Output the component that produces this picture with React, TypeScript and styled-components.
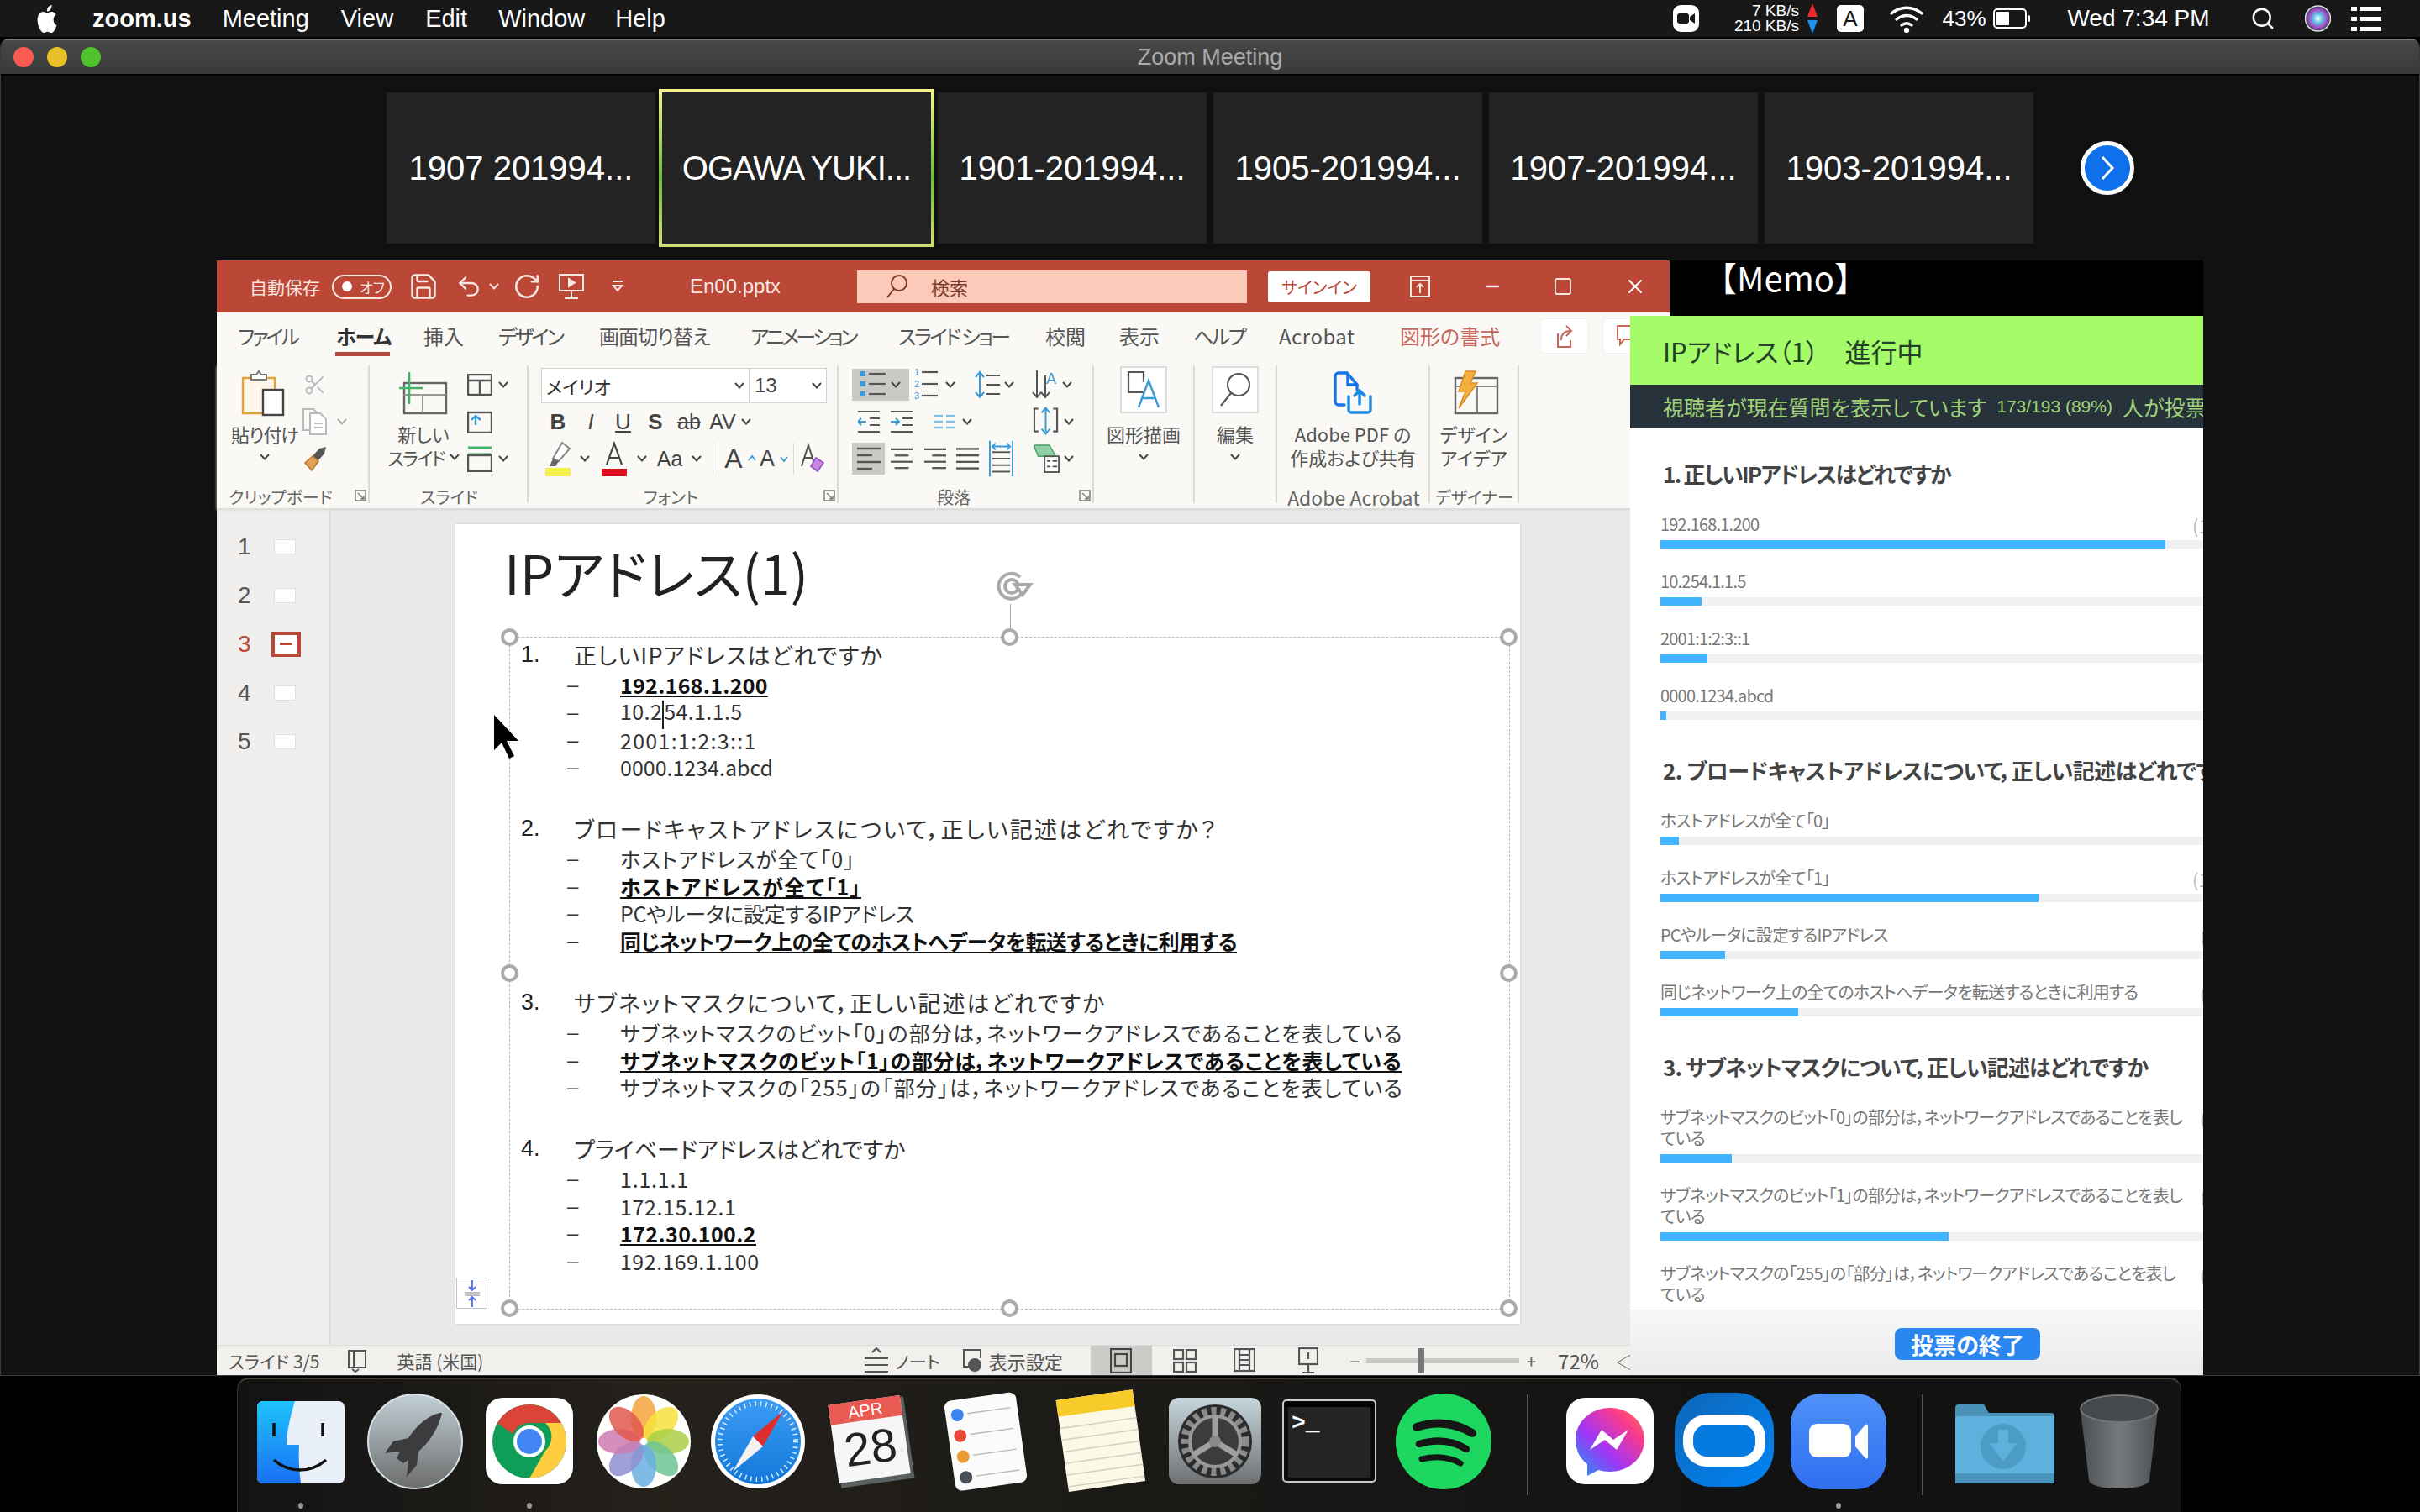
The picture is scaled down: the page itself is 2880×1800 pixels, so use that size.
import React from 'react';
import styled, { createGlobalStyle } from 'styled-components';
import { Save, Undo2, RotateCw, Scissors, Search, X, Minus, Square } from 'lucide-react';

const JP = `"Noto Sans CJK JP", "Liberation Sans", sans-serif`;
const SANS = `"Liberation Sans", "Noto Sans CJK JP", sans-serif`;

const Global = createGlobalStyle`
  html, body { margin: 0; padding: 0; background: #000; overflow: hidden; }
  * { box-sizing: border-box; }
`;

const Desktop = styled.div`
  width: 2880px; height: 1800px; background: #000; display: flex; flex-direction: column;
  overflow: hidden; font-family: ${SANS}; font-feature-settings: "palt";
`;

/* ---------- macOS menu bar ---------- */
const MenuBar = styled.div`
  height: 44px; flex: none; background: #181818; display: flex; align-items: center; color: #fff;
  padding: 0 46px 0 42px; font-size: 29px;
`;
const MenuItem = styled.span<{ $ml: number; $bold?: boolean }>`
  margin-left: ${p => p.$ml}px; font-weight: ${p => (p.$bold ? 700 : 400)}; white-space: nowrap;
`;
const MenuRight = styled.div`margin-left: auto; display: flex; align-items: center; height: 44px;`;
const MenuSlot = styled.div<{ $ml: number; $w: number; $fs?: number }>`
  margin-left: ${p => p.$ml}px; width: ${p => p.$w}px; flex: none; display: flex; align-items: center;
  justify-content: center; font-size: ${p => p.$fs ?? 28}px; white-space: nowrap; color: #fff;
`;
const NetStats = styled.div`
  margin-left: 38px; width: 81px; flex: none; display: flex; flex-direction: column; align-items: flex-end;
  font-size: 19px; line-height: 18px; color: #fff; white-space: nowrap;
`;
const KeyBox = styled.div`
  width: 32px; height: 32px; border-radius: 5px; background: #fff; color: #181818; font-size: 26px;
  display: flex; align-items: center; justify-content: center;
`;

/* ---------- Zoom window ---------- */
const ZoomWindow = styled.div`
  margin-top: 2px; height: 1592px; flex: none; display: flex; flex-direction: column; background: #111;
  border: 1px solid #3a3a3a; border-top: none; border-radius: 10px 10px 0 0; overflow: hidden;
`;
const ZoomTitle = styled.div`
  height: 44px; flex: none; background: linear-gradient(#4c4c4c, #464646 12%, #3a3a3a); border-top: 2px solid #7a7a7a;
  border-bottom: 2px solid #000; display: grid; grid-template-columns: 1fr auto 1fr; align-items: center;
  color: #ababab; font-size: 27px;
`;
const Lights = styled.div`display: flex; gap: 16px; padding-left: 15px;`;
const Light = styled.span<{ $c: string }>`width: 24px; height: 24px; border-radius: 50%; background: ${p => p.$c};`;

const ThumbStrip = styled.div`
  height: 220px; flex: none; padding: 20px 0 20px 459px; display: flex; gap: 8px; align-items: center;
`;
const Thumb = styled.div<{ $active?: boolean }>`
  width: ${p => (p.$active ? 328 : 320)}px; height: ${p => (p.$active ? 188 : 180)}px;
  margin: ${p => (p.$active ? '-4px' : '0')};
  display: flex; align-items: center; justify-content: center; color: #fff; font-size: 40px; white-space: nowrap;
  background: #232323;
  ${p => p.$active && `
    letter-spacing: -1px;
    border: 4px solid transparent;
    background: linear-gradient(#232323,#232323) padding-box, linear-gradient(#f6f68c,#6fbb3a 55%,#d2de72) border-box;
  `}
`;
const NextBtn = styled.div`
  width: 64px; height: 64px; margin-left: 48px; border-radius: 50%; background: #0e71eb; border: 5px solid #fff;
  display: flex; align-items: center; justify-content: center;
`;

const ShareArea = styled.div`flex: 1; display: flex; position: relative; padding-left: 257px; min-height: 0;`;
const SideColumn = styled.div`width: 635px; flex: none;`;
const Memo = styled.div`
  height: 66px; background: #000; color: #fff; font-family: ${JP}; font-size: 40px; line-height: 40px; padding-left: 40px;
  font-feature-settings: normal;
`;

/* ---------- PowerPoint ---------- */
const Ppt = styled.div`width: 1729px; flex: none; display: flex; flex-direction: column; font-family: ${JP}; background: #faf9f6;`;
const PptBar = styled.div`
  height: 62px; flex: none; background: #bb4737; display: flex; align-items: center; color: #f8e6e0; padding-left: 39px;
`;
const AutoSave = styled.span`font-size: 21px; width: 98px; flex: none; white-space: nowrap;`;
const Toggle = styled.div`
  width: 71px; height: 29px; border: 2px solid #f8e6e0; border-radius: 15px; display: flex; align-items: center;
  padding-left: 10px; gap: 9px; font-size: 17px;
`;
const ToggleDot = styled.span`width: 12px; height: 12px; background: #fff; border-radius: 50%;`;
const BarIcon = styled.div<{ $ml: number; $w: number }>`
  margin-left: ${p => p.$ml}px; width: ${p => p.$w}px; flex: none; display: flex; align-items: center; justify-content: center;
`;
const FileName = styled.span`font-family: ${SANS}; font-size: 24px; margin-left: 78px; width: 199px; flex: none;`;
const SearchBox = styled.div`
  width: 464px; height: 39px; flex: none; background: #fdc9b9; display: flex; align-items: center; padding-left: 34px; color: #7a3a2c;
  font-size: 22px; gap: 28px;
`;
const SignIn = styled.div`
  width: 122px; height: 37px; flex: none; margin-left: 25px; background: #fff; color: #bb4737; border-radius: 3px; display: flex;
  align-items: center; justify-content: center; font-size: 20px;
`;

const TabRow = styled.div`height: 62px; flex: none; display: flex; padding-left: 25px; align-items: flex-start;`;
const Tab = styled.div<{ $w: number; $ls: number; $active?: boolean; $accent?: boolean }>`
  width: ${p => p.$w}px; height: 50px; flex: none; line-height: 56px; font-size: 24px; white-space: nowrap; position: relative;
  letter-spacing: ${p => p.$ls}px;
  color: ${p => (p.$accent ? '#c6675a' : p.$active ? '#333' : '#555')}; font-weight: ${p => (p.$active ? 700 : 400)};
  ${p => p.$active && `
    &::after { content: ''; position: absolute; left: -1px; top: 47px; width: 65px; height: 5px; background: #b5463a; }
  `}
`;
const TabBtn = styled.div`
  width: 58px; height: 42px; margin: 7px 16px 0 0; background: #fff; border: 1px solid #efeeea; border-radius: 3px; flex: none;
  display: flex; align-items: center; justify-content: center;
`;

const Groups = styled.div`height: 171px; flex: none; display: flex; box-shadow: 0 2px 3px #d8d8d8; position: relative;`;
const Group = styled.div<{ $w: number }>`
  width: ${p => p.$w}px; flex: none; position: relative; display: flex; flex-direction: column;
  &::after { content: ''; position: absolute; right: 0; top: 1px; width: 2px; height: 164px; background: #dddbd6; }
`;
const GroupBody = styled.div`height: 145px; flex: none; display: flex;`;
const GroupLabel = styled.div<{ $launcher?: boolean; $latin?: boolean }>`
  height: 26px; line-height: 26px; font-size: ${p => (p.$latin ? 23 : 20)}px; color: #666; text-align: center; white-space: nowrap;
  padding-right: ${p => (p.$launcher ? 30 : 0)}px;
`;
const Launcher = styled.svg`position: absolute; right: 4px; bottom: 8px; width: 14px; height: 14px;`;

const BigBtn = styled.div<{ $w: number; $ml?: number }>`
  width: ${p => p.$w}px; margin-left: ${p => p.$ml ?? 0}px; flex: none; display: flex; flex-direction: column; align-items: center;
`;
const BigIcon = styled.div`height: 68px; flex: none; display: flex; align-items: center; justify-content: center;`;
const BoxIcon = styled.div`
  width: 56px; height: 56px; margin: 2px 0 10px; background: #fff; border: 2px solid #ddd; flex: none; display: flex;
  align-items: center; justify-content: center;
`;
const BigText = styled.div<{ $ls?: number }>`
  height: 28px; line-height: 28px; font-size: 22px; color: #555; white-space: nowrap; display: flex; align-items: center; gap: 6px;
  letter-spacing: ${p => p.$ls ?? 0}px;
`;
const ToolCol = styled.div<{ $ml?: number }>`margin-left: ${p => p.$ml ?? 0}px; padding-top: 2px; display: flex; flex-direction: column;`;
const ToolRow = styled.div<{ $ml?: number }>`height: 44px; display: flex; align-items: center; margin-left: ${p => p.$ml ?? 0}px;`;
const Slot = styled.div<{ $w: number; $ml?: number; $sel?: boolean }>`
  width: ${p => p.$w}px; margin-left: ${p => p.$ml ?? 0}px; height: 38px; flex: none; display: flex; align-items: center;
  justify-content: center; color: #444; background: ${p => (p.$sel ? '#cbc9c5' : 'transparent')}; gap: 6px;
`;
const Glyph = styled.span<{ $fs: number; $b?: boolean; $i?: boolean; $u?: boolean; $s?: boolean; $c?: string }>`
  font-family: ${SANS}; font-size: ${p => p.$fs}px; line-height: 1; color: ${p => p.$c ?? '#444'};
  font-weight: ${p => (p.$b ? 700 : 400)}; font-style: ${p => (p.$i ? 'italic' : 'normal')};
  text-decoration: ${p => (p.$u ? 'underline' : p.$s ? 'line-through' : 'none')}; white-space: nowrap;
`;
const VSep = styled.span`width: 1px; height: 38px; background: #dad8d3; flex: none;`;
const SelectRow = styled.div`display: flex; height: 42px; margin-left: 15px; margin-top: 2px;`;
const Select = styled.div<{ $w: number }>`
  width: ${p => p.$w}px; background: #fff; border: 1px solid #d4d2cd; display: flex; align-items: center; justify-content: space-between;
  padding: 0 5px 0 5px; font-size: 22px; color: #333; flex: none;
`;

/* ---------- work area ---------- */
const Main = styled.div`flex: 1; display: flex; min-height: 0; background: #e9e8ea;`;
const Pane = styled.div`
  width: 136px; flex: none; background: #f0efed; border-right: 2px solid #dcdcdc; padding: 27px 0 0 25px; display: flex;
  flex-direction: column; gap: 20px;
`;
const PaneRow = styled.div<{ $active?: boolean }>`
  height: 38px; display: flex; align-items: center; font-family: ${SANS}; font-size: 28px; color: ${p => (p.$active ? '#bb4737' : '#555')};
`;
const PaneNum = styled.span`width: 43px;`;
const PaneThumb = styled.span<{ $active?: boolean }>`
  background: #fff; flex: none;
  ${p => p.$active
    ? `width: 35px; height: 30px; margin-left: -3px; border: 4px solid #bb4737; position: relative;
       &::after { content: ''; position: absolute; left: 6px; right: 6px; top: 9px; height: 3px; background: #bb4737; }`
    : `width: 26px; height: 18px; border: 1px solid #dedede;`}
`;
const Canvas = styled.div`flex: 1; padding: 19px 0 0 148px; min-width: 0;`;
const Slide = styled.div`
  width: 1267px; height: 952px; background: #fff; box-shadow: 0 0 2px #bbb; position: relative; padding-left: 64px;
`;
const SlideTitle = styled.div`
  height: 134px; padding-top: 11px; font-size: 64px; line-height: 90px; color: #222; margin-left: -6px; white-space: nowrap;
`;
const TextBox = styled.div`
  width: 1191px; height: 801px; border: 1px dashed #b5b5b5; position: relative; padding: 1px 0 0 13px; color: #333;
`;
const Handle = styled.span<{ $x: number; $y: number }>`
  position: absolute; left: ${p => p.$x * 100}%; top: ${p => p.$y * 100}%; width: 21px; height: 21px; margin: -11px 0 0 -11px;
  border-radius: 50%; background: #fff; border: 4px solid #aaa;
`;
const RotLine = styled.span`position: absolute; left: 50%; top: -40px; width: 1px; height: 32px; background: #aaa; margin-left: 0;`;
const RotIcon = styled.svg`position: absolute; left: 50%; top: -83px; margin-left: -20px; width: 48px; height: 44px;`;
const FitBtn = styled.div`
  position: absolute; left: -64px; bottom: 0; width: 37px; height: 37px; background: #fff; border: 1px solid #c4c4c4;
  display: flex; align-items: center; justify-content: center;
`;
const Cursor = styled.svg`position: absolute; left: -20px; top: 92px; width: 32px; height: 52px;`;
const QBlock = styled.div`margin-bottom: 37px;`;
const QRow = styled.div`height: 39px; display: flex; align-items: center; font-size: 27px; white-space: nowrap;`;
const QNum = styled.span`width: 63px; flex: none; font-family: ${SANS}; font-size: 27px; color: #222;`;
const QText = styled.span<{ $ls: number }>`letter-spacing: ${p => p.$ls}px;`;
const SubRow = styled.div`height: 32.7px; display: flex; align-items: center; margin-left: 55px; font-size: 25px; white-space: nowrap;`;
const Dash = styled.span`width: 63px; flex: none; font-family: ${SANS}; font-size: 24px;`;
const SubText = styled.span<{ $b?: boolean; $ls: number }>`
  font-weight: ${p => (p.$b ? 700 : 400)}; text-decoration: ${p => (p.$b ? 'underline' : 'none')};
  color: ${p => (p.$b ? '#111' : '#333')}; letter-spacing: ${p => p.$ls}px;
`;
const Caret = styled.span`display: inline-block; width: 0; height: 34px; border-left: 2px solid #222; vertical-align: middle;`;

const StatusBar = styled.div`
  height: 36px; flex: none; background: #f1f0ec; border-top: 1px solid #ddd; display: flex; align-items: center; font-size: 21px; color: #555;
`;
const StatusSlot = styled.div<{ $ml: number; $w?: number; $sel?: boolean; $fs?: number }>`
  margin-left: ${p => p.$ml}px; ${p => p.$w && `width: ${p.$w}px;`} flex: none; height: 35px; display: flex; align-items: center;
  justify-content: center; white-space: nowrap; background: ${p => (p.$sel ? '#cdcbc8' : 'transparent')}; gap: 8px;
  ${p => p.$fs && `font-size: ${p.$fs}px;`}
`;
const Zoomer = styled.div`
  margin-left: 8px; width: 182px; height: 6px; background: #c9c8c5; flex: none; position: relative;
  &::after { content: ''; position: absolute; left: 62px; top: -12px; width: 7px; height: 30px; background: #777; }
`;

/* ---------- poll ---------- */
const Poll = styled.div`
  position: absolute; left: 1939px; top: 66px; width: 682px; bottom: 0; background: #fff; display: flex; flex-direction: column;
  font-family: ${JP}; overflow: hidden;
`;
const PollHead = styled.div`
  height: 82px; flex: none; background: #a6fb68; display: flex; align-items: center; padding-left: 39px; font-size: 31px; color: #24412a;
  white-space: pre;
`;
const PollStatus = styled.div`
  height: 52px; flex: none; background: #27323a; display: flex; align-items: center; padding-left: 39px; color: #a0d27a; font-size: 25px;
  white-space: nowrap; overflow: hidden; gap: 12px;
`;
const PollCount = styled.span`font-size: 21px; font-family: ${SANS};`;
const PollBody = styled.div`flex: 1; min-height: 0; overflow: hidden; padding: 38px 0 0 36px;`;
const PollQ = styled.div<{ $ls: number }>`
  height: 32px; line-height: 32px; margin: 0 0 31px 3px; font-size: 26px; font-weight: 700; color: #444; white-space: nowrap;
  letter-spacing: ${p => p.$ls}px;
`;
const PollOpt = styled.div`position: relative; margin-bottom: 26px;`;
const OptText = styled.div`font-size: 20px; line-height: 25px; letter-spacing: -0.8px; color: #777; white-space: pre-line; margin-bottom: 7px;`;
const OptTrack = styled.div`height: 10px; width: 680px; background: #f0f0f2;`;
const OptFill = styled.div`height: 10px; background: #42b4ff;`;
const OptMark = styled.span<{ $far?: boolean }>`
  position: absolute; top: -2px; left: ${p => (p.$far ? 642 : 633)}px; font-size: 22px; color: #bbb; white-space: nowrap;
`;
const PollGroup = styled.div`margin-bottom: 44px;`;
const PollFoot = styled.div`
  height: 78px; flex: none; background: linear-gradient(#f7f7f7, #ebebeb); border-top: 1px solid #ddd; display: flex;
  padding: 21px 0 0 315px;
`;
const EndBtn = styled.div`
  width: 173px; height: 38px; border-radius: 8px; background: #2a86f0; color: #fff; font-weight: 700; font-size: 27px; display: flex;
  align-items: center; justify-content: center;
`;

/* ---------- dock ---------- */
const Dock = styled.div`
  margin: 2px 0 0 282px; width: 2314px; height: 160px; flex: none; padding-left: 7px; display: flex;
  background: linear-gradient(90deg, #131313, #25211b 22%, #1b1a17 45%, #121212 80%, #131313);
  border-top: 2px solid #444038; border-right: 1px solid #333; border-left: 1px solid #333; border-radius: 14px 14px 0 0;
`;
const DockItem = styled.div`width: 136px; flex: none; padding: 12px 6px 0; position: relative;`;
const DockDot = styled.span`position: absolute; left: 65px; top: 147px; width: 6px; height: 7px; border-radius: 50%; background: #999;`;
const DockSep = styled.div`
  width: 62px; flex: none; position: relative;
  &::after { content: ''; position: absolute; left: 31px; top: 18px; width: 1px; height: 120px; background: #555; }
`;
const Svg = styled.svg.attrs({ viewBox: '0 0 124 124', xmlns: 'http://www.w3.org/2000/svg' })`width: 124px; height: 124px; display: block;`;

/* ---------- small icons ---------- */
const Chev = ({ c = '#444' }: { c?: string }) => (
  <svg width="12" height="8" viewBox="0 0 12 8"><polyline points="1,1 6,6.5 11,1" fill="none" stroke={c} strokeWidth="2" /></svg>
);
const LaunchIcon = () => (
  <Launcher viewBox="0 0 14 14"><path d="M1 13V1h12v12z" fill="none" stroke="#777" strokeWidth="1.4" /><path d="M4 4l7 7M11 7v4H7" fill="none" stroke="#777" strokeWidth="1.4" /></Launcher>
);
const s = (w: number, h: number, body: React.ReactNode) => <svg width={w} height={h} viewBox={`0 0 ${w} ${h}`}>{body}</svg>;
const lines = (ys: number[], x1: number, x2: number, c = '#555', sw = 2) => ys.map(y => <line key={y} x1={x1} x2={x2} y1={y} y2={y} stroke={c} strokeWidth={sw} />);
const alignLines = (rows: [number, number][]) => rows.map(([a, b], i) => <line key={i} x1={a} x2={b} y1={3 + i * 8} y2={3 + i * 8} stroke="#555" strokeWidth="2.4" />);

const AppleLogo = () => (
  <svg width="28" height="33" viewBox="0 0 24 24" preserveAspectRatio="none"><path fill="#fff" d="M12.152 6.896c-.948 0-2.415-1.078-3.96-1.04-2.04.027-3.91 1.183-4.961 3.014-2.117 3.675-.546 9.103 1.519 12.09 1.013 1.454 2.208 3.09 3.792 3.039 1.52-.065 2.09-.987 3.935-.987 1.831 0 2.35.987 3.96.948 1.637-.026 2.676-1.48 3.676-2.948 1.156-1.688 1.636-3.325 1.662-3.415-.039-.013-3.182-1.221-3.22-4.857-.026-3.04 2.48-4.494 2.597-4.559-1.429-2.09-3.623-2.324-4.39-2.376-2-.156-3.675 1.09-4.61 1.09zM15.53 3.83c.843-1.012 1.4-2.427 1.245-3.83-1.207.052-2.662.805-3.532 1.818-.78.896-1.454 2.338-1.273 3.714 1.338.104 2.715-.688 3.559-1.701" /></svg>
);
const ZoomBarIcon = () => s(31, 32, <><rect width="31" height="32" rx="9" fill="#fff" /><rect x="5" y="10" width="14" height="12" rx="3" fill="#181818" /><path d="M20 14l6-4v12l-6-4z" fill="#181818" /></>);
const Arrows = () => s(14, 36, <><path d="M7 0l6 16H1z" fill="#f02a2a" /><path d="M7 36L1 20h12z" fill="#1e90f0" /></>);
const WifiIcon = () => s(42, 34, <g fill="none" stroke="#fff" strokeWidth="3.4" strokeLinecap="round"><path d="M3 11C14 2 28 2 39 11" /><path d="M9 18c8-6 16-6 24 0" /><path d="M15 25c4-3 8-3 12 0" /><circle cx="21" cy="31" r="1.5" fill="#fff" /></g>);
const Battery = () => s(45, 24, <><rect x="1" y="1" width="38" height="22" rx="4" fill="none" stroke="#fff" strokeWidth="2" /><rect x="4" y="4" width="15" height="16" rx="1" fill="#fff" /><rect x="41" y="8" width="3" height="8" rx="1.5" fill="#fff" /></>);
const Siri = () => (
  <svg width="31" height="32" viewBox="0 0 31 32"><defs><radialGradient id="sr"><stop offset="0" stopColor="#fff" /><stop offset=".35" stopColor="#5bc8e8" /><stop offset=".7" stopColor="#a84fc8" /><stop offset="1" stopColor="#30405a" /></radialGradient></defs><circle cx="15.5" cy="16" r="15" fill="url(#sr)" stroke="#ddd" strokeWidth="1.5" /></svg>
);
const ListIcon = () => s(36, 29, <g fill="#fff"><rect width="7" height="5" /><rect x="11" width="25" height="5" /><rect y="12" width="7" height="5" /><rect x="11" y="12" width="25" height="5" /><rect y="24" width="7" height="5" /><rect x="11" y="24" width="25" height="5" /></g>);

const UndoChev = () => <Chev c="#f8e6e0" />;
const Present = () => s(30, 30, <g fill="none" stroke="#f8e6e0" strokeWidth="2"><rect x="1" y="1" width="28" height="19" /><path d="M15 20v9M7 29h16" /><path d="M12 6l7 4.5-7 4.5z" fill="#f8e6e0" /></g>);
const QatMore = () => s(14, 16, <g fill="none" stroke="#f8e6e0" strokeWidth="2"><path d="M1 2h12" /><path d="M2 7l5 6 5-6z" /></g>);
const RibbonDisp = () => s(24, 26, <g fill="none" stroke="#f8e6e0" strokeWidth="2"><rect x="1" y="1" width="22" height="24" /><path d="M1 6h22M12 21v-10M8 14l4-4 4 4" /></g>);
const ShareIcon = () => s(20, 30, <g fill="none" stroke="#c6675a" strokeWidth="2"><path d="M2 12v16h15V20" /><path d="M6 20c0-7 4-11 11-11M12 3l6 6-6 6" /></g>);
const CommentIcon = () => s(26, 28, <path d="M2 2h22v16H10l-5 6v-6H2z" fill="none" stroke="#c6675a" strokeWidth="2" />);

const PasteIcon = () => s(56, 56, <>
  <path d="M2 10h38v42H2z" fill="#fff8ea" stroke="#e2a33c" strokeWidth="2.4" />
  <path d="M12 12V6h6l3-4 3 4h6v6z" fill="#fff" stroke="#777" strokeWidth="2" />
  <rect x="26" y="24" width="24" height="30" fill="#fff" stroke="#444" strokeWidth="2.4" /></>);
const ScissorsIcon = () => <Scissors size={28} color="#b8bcc0" strokeWidth={1.6} />;
const CopyIcon = () => s(30, 32, <g fill="none" stroke="#b8bcc0" strokeWidth="2"><path d="M8 26H1V1h12l5 5" /><path d="M9 6h12l7 7v18H9z" fill="#fff" /><path d="M14 18h10M14 23h10" /></g>);
const BrushIcon = () => s(30, 32, <><path d="M28 2l-8 2-8 9 6 6 8-9z" fill="#555" /><path d="M12 13l-9 8 8 9 8-11z" fill="#e3a253" stroke="#b47a30" strokeWidth="1.5" /></>);
const NewSlideIcon = () => s(58, 52, <g fill="none"><rect x="6" y="14" width="50" height="36" stroke="#666" strokeWidth="2.4" /><path d="M6 28h50M28 28v22" stroke="#999" strokeWidth="2" /><path d="M12 1v38M0 20h28" stroke="#43b36a" strokeWidth="2.6" /></g>);
const LayoutIcon = () => s(30, 26, <g fill="none" stroke="#555" strokeWidth="2.4"><rect x="1" y="1" width="28" height="24" /><path d="M1 8h28M15 8v17" /></g>);
const ResetIcon = () => s(30, 28, <g fill="none"><rect x="1" y="3" width="28" height="24" stroke="#555" strokeWidth="2.4" /><path d="M10 18V8M5 12l5-5 6 5" stroke="#3a9bd8" strokeWidth="2.4" /></g>);
const SectionIcon = () => s(30, 32, <g fill="none"><path d="M1 3h28" stroke="#43b36a" strokeWidth="3" /><rect x="1" y="9" width="28" height="3" fill="#8fd0a5" /><rect x="1" y="12" width="28" height="19" stroke="#555" strokeWidth="2.4" /></g>);
const HighlightIcon = () => s(32, 42, <><path d="M20 2l9 7-13 15-7-3z" fill="#fff" stroke="#888" strokeWidth="2" /><path d="M9 21l7 3-4 6H5z" fill="#666" /><rect y="32" width="30" height="10" fill="#f6f04a" /></>);
const FontColorA = () => (
  <svg width="30" height="42" viewBox="0 0 30 42"><path d="M6 28L15 3l9 25M9 20h12" fill="none" stroke="#444" strokeWidth="2.2" /><rect y="33" width="30" height="9" fill="#e10e1e" /></svg>
);
const ClearIcon = () => s(30, 38, <><path d="M2 28L10 3l8 25M5 18h10" fill="none" stroke="#555" strokeWidth="2" /><path d="M19 18l9 6-7 10-8-6z" fill="#c98ae0" stroke="#9a4fc0" strokeWidth="1.6" /></>);
const UpDown = () => s(10, 12, <path d="M1 8l4-5 4 5" fill="none" stroke="#3a9bd8" strokeWidth="1.8" />);
const DownMark = () => s(10, 12, <path d="M1 4l4 5 4-5" fill="none" stroke="#3a9bd8" strokeWidth="1.8" />);
const BulletIcon = () => s(30, 34, <>{[4, 16, 28].map(y => <g key={y}><rect x="0" y={y - 3} width="6" height="6" fill="#3a9bd8" /><line x1="10" x2="30" y1={y} y2={y} stroke="#555" strokeWidth="2.2" /></g>)}</>);
const NumIcon = () => s(28, 42, <>{[6, 20, 34].map((y, i) => <g key={y}><text x="0" y={y + 4} fontSize="11" fontFamily="Liberation Sans" fill="#3a9bd8">{i + 1}</text><line x1="9" x2="28" y1={y} y2={y} stroke="#555" strokeWidth="2.2" /></g>)}</>);
const SpacingIcon = () => s(30, 36, <g><path d="M6 3v30M1 9l5-6 5 6M1 27l5 6 5-6" fill="none" stroke="#3a9bd8" strokeWidth="2" />{lines([7, 18, 29], 14, 30)}</g>);
const TextDirIcon = () => s(30, 38, <g fill="none"><path d="M6 2v32M1 28l5 6 5-6M16 8v26M11 28l5 6 5-6" stroke="#555" strokeWidth="2" /><text x="17" y="18" fontSize="18" fontFamily="Liberation Sans" fill="#3a9bd8">A</text></g>);
const IndentL = () => s(26, 28, <g>{lines([2, 26], 0, 26)}{lines([10, 18], 14, 26)}<path d="M0 14h10M4 10l-4 4 4 4" fill="none" stroke="#3a9bd8" strokeWidth="2" /></g>);
const IndentR = () => s(26, 28, <g>{lines([2, 26], 0, 26)}{lines([10, 18], 14, 26)}<path d="M0 14h10M6 10l4 4-4 4" fill="none" stroke="#3a9bd8" strokeWidth="2" /></g>);
const ColumnsIcon = () => s(24, 20, <g>{[3, 10, 17].map(y => <g key={y}><line x1="0" x2="10" y1={y} y2={y} stroke="#7fc0e8" strokeWidth="2.4" /><line x1="14" x2="24" y1={y} y2={y} stroke="#7fc0e8" strokeWidth="2.4" /></g>)}</g>);
const AlignTextIcon = () => s(32, 38, <g fill="none"><path d="M7 3H2v28h5M25 3h5v28h-5" stroke="#555" strokeWidth="2.2" /><path d="M16 2v30M11 8l5-6 5 6M11 28l5 6 5-6" stroke="#3a9bd8" strokeWidth="2" /></g>);
const Align = ({ rows }: { rows: [number, number][] }) => s(28, 30, <g>{alignLines(rows)}</g>);
const DistIcon = () => s(30, 44, <g>{lines([14, 22, 30, 38], 4, 26)}<path d="M1 0v44M29 0v44M4 7h22M8 3L4 7l4 4M22 3l4 4-4 4" fill="none" stroke="#3a9bd8" strokeWidth="2" /></g>);
const SmartIcon = () => s(34, 42, <><path d="M0 4h20l8 14H6z" fill="#8fd0a5" stroke="#43a060" strokeWidth="1.5" /><rect x="14" y="18" width="18" height="20" fill="#fff" stroke="#555" strokeWidth="2" /><path d="M17 24h4M24 24h6M17 31h4M24 31h6" stroke="#555" strokeWidth="2" /></>);
const ShapesIcon = () => s(40, 46, <><path d="M20 26H2V2h18v12" fill="none" stroke="#555" strokeWidth="2.2" /><path d="M14 44L26 12l12 32M19 33h14" fill="none" stroke="#3a9bd8" strokeWidth="2.4" /></>);
const FindIcon = () => <svg width="38" height="42" viewBox="0 0 38 42"><circle cx="23" cy="15" r="13" fill="none" stroke="#555" strokeWidth="2.2" /><path d="M14 25L2 40" stroke="#555" strokeWidth="2.2" /></svg>;
const PdfIcon = () => s(46, 52, <g fill="none" strokeLinecap="round" stroke="#1a73e8" strokeWidth="3.4"><path d="M13 40H6a4 4 0 0 1-4-4V6a4 4 0 0 1 4-4h10l12 14v6" /><path d="M17 3v13h11" /><path d="M18 30v16a3 3 0 0 0 3 3h20a3 3 0 0 0 3-3V30" stroke="#1a8ae8" /><path d="M31 39V23M25 29l6-6 6 6" stroke="#1a8ae8" /></g>);
const DesignIcon = () => s(60, 56, <g fill="none"><rect x="8" y="10" width="50" height="42" stroke="#666" strokeWidth="2.4" /><path d="M8 20h50M34 20v32" stroke="#888" strokeWidth="2" /><path d="M12 46l8-20h-8L20 2h12l-6 14h8z" fill="#f2b13c" stroke="#e08b20" strokeWidth="1.5" /></g>);
const FitIcon = () => s(22, 32, <g fill="none"><path d="M11 0v12M7 8l4 4 4-4M11 32V20M7 24l4-4 4 4" stroke="#4a6cf0" strokeWidth="1.8" /><path d="M2 15h18M2 18h18" stroke="#aaa" strokeWidth="1.6" /></g>);

const StatBook = () => s(24, 28, <g fill="none" stroke="#555" strokeWidth="2"><path d="M2 2h20v20H2z" /><path d="M8 2v20M6 24l4 3 4-3" /></g>);
const NotesI = () => s(28, 34, <g>{lines([14, 22, 30], 0, 28)}<path d="M9 7l5-5 5 5" fill="none" stroke="#555" strokeWidth="2" /></g>);
const DispI = () => s(24, 30, <g fill="none" stroke="#555" strokeWidth="2"><path d="M22 12V2H2v20h6" /><circle cx="15" cy="20" r="7" fill="#555" /></g>);
const ViewNormal = () => s(26, 30, <g fill="none" stroke="#444" strokeWidth="2.2"><rect x="1" y="1" width="24" height="28" /><rect x="6" y="7" width="14" height="14" /></g>);
const ViewSort = () => s(28, 28, <g fill="none" stroke="#555" strokeWidth="2.2"><rect x="1" y="1" width="11" height="11" /><rect x="16" y="1" width="11" height="11" /><rect x="1" y="16" width="11" height="11" /><rect x="16" y="16" width="11" height="11" /></g>);
const ViewRead = () => s(26, 30, <g fill="none" stroke="#555" strokeWidth="2.2"><rect x="1" y="1" width="24" height="26" /><path d="M7 1v26M19 1v26M7 8h12M7 14h12M7 20h12" /></g>);
const ViewShow = () => s(24, 32, <g fill="none" stroke="#555" strokeWidth="2.2"><rect x="1" y="1" width="22" height="19" /><path d="M12 20v10M5 30h14M12 6v8" /></g>);

/* ---------- dock icons ---------- */
const Finder = () => (
  <Svg><defs><linearGradient id="fb" x1="0" y1="0" x2="0" y2="1"><stop offset="0" stopColor="#1ec4fb" /><stop offset="1" stopColor="#1a6ff5" /></linearGradient></defs>
    <rect x="10" y="14" width="104" height="98" rx="7" fill="#e9f0f9" />
    <path d="M17 14h38c-6 20-10 38-10 52h15c-1 16 0 30 2 46H17a7 7 0 0 1-7-7V21a7 7 0 0 1 7-7z" fill="url(#fb)" />
    <path d="M30 40v16M88 40v16" stroke="#111" strokeWidth="3.5" />
    <path d="M30 84c18 16 44 16 62 0" fill="none" stroke="#111" strokeWidth="3.5" /></Svg>
);
const Launchpad = () => (
  <Svg><defs><linearGradient id="lp" x1="0" y1="0" x2="0" y2="1"><stop offset="0" stopColor="#c2d0d6" /><stop offset="1" stopColor="#6c6c6c" /></linearGradient></defs>
    <circle cx="62" cy="62" r="56" fill="url(#lp)" stroke="#d6e2e6" strokeWidth="2" />
    <path d="M92 28c-14 3-28 14-38 30l-18 4-10 14 18-2-4 8 8 6 6-4-2 20 12-14 2-16c14-12 24-28 28-46z" fill="#3c3c3e" /></Svg>
);
const Chrome = () => (
  <Svg><rect x="10" y="10" width="104" height="103" rx="20" fill="#fff" />
    <circle cx="62" cy="62" r="44" fill="#0f9d58" />
    <path d="M62 18a44 44 0 0 1 38 22H62a22 22 0 0 0-20 13L24 40a44 44 0 0 1 38-22z" fill="#db4437" />
    <path d="M100 40a44 44 0 0 1-38 66l19-33a22 22 0 0 0 0-33z" fill="#ffcd40" />
    <circle cx="62" cy="62" r="19" fill="#fff" /><circle cx="62" cy="62" r="15" fill="#4285f4" /></Svg>
);
const Photos = () => {
  const cs = ['#f5a33c', '#f6e23c', '#a9cf45', '#6fc495', '#6aaee0', '#8f8ed0', '#cd7bb0', '#e2584e'];
  return (
    <Svg><circle cx="62" cy="62" r="56" fill="#fff" />
      {cs.map((c, i) => <ellipse key={c} cx="62" cy="33" rx="15" ry="25" fill={c} opacity=".85" transform={`rotate(${i * 45} 62 62)`} />)}</Svg>
  );
};
const Safari = () => (
  <Svg><defs><linearGradient id="sf" x1="0" y1="0" x2="0" y2="1"><stop offset="0" stopColor="#3b9cf5" /><stop offset="1" stopColor="#1277d8" /></linearGradient></defs>
    <circle cx="62" cy="62" r="56" fill="#fff" /><circle cx="62" cy="62" r="51" fill="url(#sf)" />
    <circle cx="62" cy="62" r="45" fill="none" stroke="#fff" strokeWidth="6" strokeDasharray="1.5 5" opacity=".85" />
    <path d="M92 26L56 56l12 12z" fill="#e22c2c" /><path d="M32 98L56 56l12 12z" fill="#f2f2f2" /></Svg>
);
const Calendar = () => (
  <Svg><g transform="rotate(-8 62 62)">
    <rect x="18" y="14" width="88" height="98" fill="#5a5f60" />
    <rect x="16" y="12" width="86" height="94" fill="#f6f6f6" />
    <rect x="16" y="12" width="86" height="24" fill="#e85a52" />
    <text x="59" y="31" textAnchor="middle" fontFamily="Liberation Sans" fontSize="20" fill="#fff">APR</text>
    <text x="59" y="88" textAnchor="middle" fontFamily="Liberation Sans" fontSize="56" fill="#222">28</text></g></Svg>
);
const Reminders = () => (
  <Svg><g transform="rotate(-8 62 62)"><rect x="18" y="8" width="86" height="108" rx="8" fill="#fbfbfb" />
    {['#3c82f0', '#e8483c', '#ec9a34', '#4a5058'].map((c, i) => <g key={c}><circle cx="32" cy={26 + i * 25} r="7.5" fill={c} /><line x1="44" x2="96" y1={26 + i * 25} y2={26 + i * 25} stroke="#b8b8b8" strokeWidth="1.5" /></g>)}</g></Svg>
);
const NotesApp = () => (
  <Svg><g transform="rotate(-8 62 62)"><rect x="16" y="6" width="92" height="110" fill="#fbf8e6" /><rect x="16" y="6" width="92" height="20" fill="#f7cc2a" />
    {[40, 54, 68, 82, 96, 110].map(y => <line key={y} x1="16" x2="108" y1={y} y2={y} stroke="#d2cfc0" strokeWidth="1.5" />)}</g></Svg>
);
const SysPrefs = () => (
  <Svg><defs><linearGradient id="sp" x1="0" y1="0" x2="0" y2="1"><stop offset="0" stopColor="#c6d6dc" /><stop offset="1" stopColor="#6e7072" /></linearGradient></defs>
    <rect x="7" y="10" width="110" height="103" rx="12" fill="url(#sp)" />
    <circle cx="62" cy="62" r="44" fill="#2a2c2e" /><circle cx="62" cy="62" r="36" fill="none" stroke="#8a8a8a" strokeWidth="10" strokeDasharray="6 5" />
    <circle cx="62" cy="62" r="30" fill="#3a3c3e" stroke="#999" strokeWidth="4" />
    <path d="M62 32v30M62 62L36 78M62 62l26 16" stroke="#a0a0a0" strokeWidth="7" /><circle cx="62" cy="62" r="7" fill="#8a8a8a" /></Svg>
);
const Terminal = () => (
  <Svg><rect x="7" y="13" width="110" height="97" rx="4" fill="#0a0a0a" stroke="#c8c8c8" strokeWidth="2" /><rect x="13" y="21" width="98" height="84" fill="#232323" />
    <rect x="9" y="15" width="106" height="6" fill="#000" />
    <text x="17" y="48" fontFamily="Liberation Mono" fontWeight="700" fontSize="28" fill="#fff">&gt;_</text></Svg>
);
const Spotify = () => (
  <Svg><circle cx="62" cy="62" r="57" fill="#1ed760" />
    <g fill="none" stroke="#161616" strokeLinecap="round"><path d="M30 45c24-8 46-5 66 7" strokeWidth="10" /><path d="M33 65c20-6 40-4 56 6" strokeWidth="8.5" /><path d="M36 83c17-4 32-3 46 5" strokeWidth="7" /></g></Svg>
);
const Messenger = () => (
  <Svg><defs><linearGradient id="ms" x1="0" y1="1" x2="1" y2="0"><stop offset="0" stopColor="#1a9cf5" /><stop offset=".4" stopColor="#a035f5" /><stop offset=".75" stopColor="#f93a8c" /><stop offset="1" stopColor="#ff7a50" /></linearGradient></defs>
    <rect x="10" y="10" width="104" height="103" rx="22" fill="#fff" />
    <path d="M62 22c-23 0-41 17-41 38 0 12 5 22 14 29v14l13-7c4 1 9 2 14 2 23 0 41-17 41-38S85 22 62 22z" fill="url(#ms)" />
    <path d="M38 72l14-24 14 12 18-12-14 24-14-12z" fill="#fff" /></Svg>
);
const Outlook = () => (
  <Svg><defs><linearGradient id="ol" x1="0" y1="0" x2="1" y2="1"><stop offset="0" stopColor="#0f66b8" /><stop offset="1" stopColor="#0084f4" /></linearGradient></defs>
    <rect x="3" y="4" width="118" height="112" rx="44" fill="url(#ol)" />
    <rect x="19" y="36" width="86" height="50" rx="22" fill="#057be0" stroke="#fff" strokeWidth="12" /></Svg>
);
const ZoomApp = () => (
  <Svg><defs><linearGradient id="zm" x1="0" y1="0" x2="0" y2="1"><stop offset="0" stopColor="#4f90f8" /><stop offset="1" stopColor="#2e6ff0" /></linearGradient></defs>
    <rect x="5" y="5" width="114" height="114" rx="36" fill="url(#zm)" />
    <rect x="27" y="41" width="50" height="40" rx="9" fill="#fff" /><path d="M82 56l12-14a2 2 0 0 1 3 1v38a2 2 0 0 1-3 1L82 68z" fill="#fff" /></Svg>
);
const Folder = () => (
  <Svg><path d="M3 22a4 4 0 0 1 4-4h30l6 10h74a4 4 0 0 1 4 4v6H3z" fill="#4a92b8" />
    <rect x="3" y="32" width="118" height="80" rx="3" fill="#5eb1dc" /><rect x="3" y="100" width="118" height="12" fill="#4a94bc" />
    <ellipse cx="60" cy="68" rx="27" ry="27" fill="#4d9cc6" /><path d="M54 48h12v16h10L60 86 44 64h10z" fill="#5eb1dc" /></Svg>
);
const Trash = () => (
  <Svg><defs><linearGradient id="tr" x1="0" y1="0" x2="1" y2="0"><stop offset="0" stopColor="#4c5054" /><stop offset=".5" stopColor="#777a7c" /><stop offset="1" stopColor="#4c5054" /></linearGradient></defs>
    <path d="M16 24l10 84c1 6 14 10 36 10s34-4 36-10l10-84z" fill="url(#tr)" /><ellipse cx="62" cy="23" rx="46" ry="16" fill="#46494c" stroke="#70757a" strokeWidth="2" /></Svg>
);

/* ---------- data ---------- */
const thumbs = ['1907 201994...', 'OGAWA YUKI...', '1901-201994...', '1905-201994...', '1907-201994...', '1903-201994...'];
const menus: [string, number, boolean?][] = [['zoom.us', 40, true], ['Meeting', 37], ['View', 38], ['Edit', 38], ['Window', 37], ['Help', 36]];
const tabs: [string, number, number][] = [['ファイル', 117, -3], ['ホーム', 104, -1], ['挿入', 89, 0], ['デザイン', 120, -3], ['画面切り替え', 180, -1], ['アニメーション', 176, -3.5], ['スライド ショー', 175, -2.5], ['校閲', 88, 0], ['表示', 88, 0], ['ヘルプ', 102, -2.5], ['Acrobat', 144, 0.5], ['図形の書式', 167, 0]];
type Sub = { t: React.ReactNode; b?: boolean; ls: number };
const slideQs: { q: string; ls: number; items: Sub[] }[] = [
  { q: '正しいIPアドレスはどれですか', ls: 1.3, items: [{ t: '192.168.1.200', b: true, ls: 0.3 }, { t: <>10.2<Caret />54.1.1.5</>, ls: 0.4 }, { t: '2001:1:2:3::1', ls: 1.3 }, { t: '0000.1234.abcd', ls: 0 }] },
  { q: 'ブロードキャストアドレスについて，正しい記述はどれですか？', ls: 2.3, items: [{ t: 'ホストアドレスが全て「0」', ls: 1.15 }, { t: 'ホストアドレスが全て「1」', b: true, ls: 1.07 }, { t: 'PCやルータに設定するIPアドレス', ls: -0.3 }, { t: '同じネットワーク上の全てのホストへデータを転送するときに利用する', b: true, ls: -0.55 }] },
  { q: 'サブネットマスクについて，正しい記述はどれですか', ls: 2, items: [{ t: 'サブネットマスクのビット「0」の部分は，ネットワークアドレスであることを表している', ls: 1.2 }, { t: 'サブネットマスクのビット「1」の部分は，ネットワークアドレスであることを表している', b: true, ls: 0.63 }, { t: 'サブネットマスクの「255」の「部分」は，ネットワークアドレスであることを表している', ls: 1.4 }] },
  { q: 'プライベードアドレスはどれですか', ls: -0.1, items: [{ t: '1.1.1.1', ls: 0.8 }, { t: '172.15.12.1', ls: 0.6 }, { t: '172.30.100.2', b: true, ls: 0.4 }, { t: '192.169.1.100', ls: 0.45 }] },
];
const pollQs: { title: string; ls: number; opts: { t: string; w: number; mark?: 'near' | 'far' }[] }[] = [
  { title: '1. 正しいIPアドレスはどれですか', ls: -1.7, opts: [{ t: '192.168.1.200', w: 601, mark: 'near' }, { t: '10.254.1.1.5', w: 49 }, { t: '2001:1:2:3::1', w: 56 }, { t: '0000.1234.abcd', w: 7 }] },
  { title: '2. ブロードキャストアドレスについて，正しい記述はどれですか', ls: -0.5, opts: [{ t: 'ホストアドレスが全て「0」', w: 22 }, { t: 'ホストアドレスが全て「1」', w: 450, mark: 'near' }, { t: 'PCやルータに設定するIPアドレス', w: 77, mark: 'far' }, { t: '同じネットワーク上の全てのホストへデータを転送するときに利用する', w: 164, mark: 'far' }] },
  { title: '3. サブネットマスクについて，正しい記述はどれですか', ls: -0.9, opts: [{ t: 'サブネットマスクのビット「0」の部分は，ネットワークアドレスであることを表し\nている', w: 85, mark: 'far' }, { t: 'サブネットマスクのビット「1」の部分は，ネットワークアドレスであることを表し\nている', w: 343, mark: 'far' }, { t: 'サブネットマスクの「255」の「部分」は，ネットワークアドレスであることを表し\nている', w: 285, mark: 'far' }] },
];
const handles: [number, number][] = [[0, 0], [0.5, 0], [1, 0], [0, 0.5], [1, 0.5], [0, 1], [0.5, 1], [1, 1]];
const dockLeft = [{ I: Finder, dot: true }, { I: Launchpad }, { I: Chrome, dot: true }, { I: Photos }, { I: Safari }, { I: Calendar }, { I: Reminders }, { I: NotesApp }, { I: SysPrefs }, { I: Terminal }, { I: Spotify }];
const dockMid = [{ I: Messenger }, { I: Outlook }, { I: ZoomApp, dot: true }];
const dockRight = [{ I: Folder }, { I: Trash }];
const renderDock = (list: { I: () => React.ReactElement; dot?: boolean }[]) => list.map(({ I, dot }, i) => <DockItem key={i}><I />{dot && <DockDot />}</DockItem>);

export default function App() {
  return (
    <Desktop>
      <Global />
      <MenuBar>
        <AppleLogo />
        {menus.map(([m, ml, b]) => <MenuItem key={m} $ml={ml} $bold={b}>{m}</MenuItem>)}
        <MenuRight>
          <MenuSlot $ml={0} $w={31}><ZoomBarIcon /></MenuSlot>
          <NetStats><span>7 KB/s</span><span>210 KB/s</span></NetStats>
          <MenuSlot $ml={9} $w={14}><Arrows /></MenuSlot>
          <MenuSlot $ml={22} $w={32}><KeyBox>A</KeyBox></MenuSlot>
          <MenuSlot $ml={30} $w={42}><WifiIcon /></MenuSlot>
          <MenuSlot $ml={22} $w={51} $fs={26}>43%</MenuSlot>
          <MenuSlot $ml={9} $w={45}><Battery /></MenuSlot>
          <MenuSlot $ml={42} $w={172}>Wed 7:34 PM</MenuSlot>
          <MenuSlot $ml={47} $w={30}><Search size={32} color="#fff" strokeWidth={2} /></MenuSlot>
          <MenuSlot $ml={35} $w={31}><Siri /></MenuSlot>
          <MenuSlot $ml={24} $w={36}><ListIcon /></MenuSlot>
        </MenuRight>
      </MenuBar>

      <ZoomWindow>
        <ZoomTitle>
          <Lights><Light $c="#fc5b52" /><Light $c="#e8bf28" /><Light $c="#52c22c" /></Lights>
          <span>Zoom Meeting</span>
          <span />
        </ZoomTitle>
        <ThumbStrip>
          {thumbs.map((t, i) => <Thumb key={i} $active={i === 1}>{t}</Thumb>)}
          <NextBtn><svg width="18" height="32" viewBox="0 0 18 32"><path d="M3 3l12 13L3 29" fill="none" stroke="#fff" strokeWidth="3" /></svg></NextBtn>
        </ThumbStrip>

        <ShareArea>
          <Ppt>
            <PptBar>
              <AutoSave>自動保存</AutoSave>
              <Toggle><ToggleDot />オフ</Toggle>
              <BarIcon $ml={20} $w={36}><Save size={36} color="#f8e6e0" strokeWidth={1.6} /></BarIcon>
              <BarIcon $ml={20} $w={32}><Undo2 size={34} color="#f8e6e0" strokeWidth={1.8} /></BarIcon>
              <BarIcon $ml={7} $w={14}><UndoChev /></BarIcon>
              <BarIcon $ml={15} $w={34}><RotateCw size={34} color="#f8e6e0" strokeWidth={1.8} /></BarIcon>
              <BarIcon $ml={20} $w={32}><Present /></BarIcon>
              <BarIcon $ml={31} $w={16}><QatMore /></BarIcon>
              <FileName>En00.pptx</FileName>
              <SearchBox>
                <svg width="26" height="30" viewBox="0 0 26 30"><circle cx="16" cy="11" r="9" fill="none" stroke="#7a3a2c" strokeWidth="2" /><path d="M10 18L2 28" stroke="#7a3a2c" strokeWidth="2" /></svg>
                検索
              </SearchBox>
              <SignIn>サインイン</SignIn>
              <BarIcon $ml={47} $w={24}><RibbonDisp /></BarIcon>
              <BarIcon $ml={62} $w={24}><Minus size={24} color="#f8e6e0" strokeWidth={2.4} /></BarIcon>
              <BarIcon $ml={60} $w={24}><Square size={26} color="#f8e6e0" strokeWidth={1.8} /></BarIcon>
              <BarIcon $ml={60} $w={28}><X size={30} color="#fff" strokeWidth={1.8} /></BarIcon>
            </PptBar>

            <TabRow>
              {tabs.map(([t, w, ls], i) => <Tab key={t} $w={w} $ls={ls} $active={i === 1} $accent={i === 11}>{t}</Tab>)}
              <TabBtn><ShareIcon /></TabBtn>
              <TabBtn><CommentIcon /></TabBtn>
            </TabRow>

            <Groups>
              <Group $w={182}>
                <GroupBody>
                  <BigBtn $w={76} $ml={19}>
                    <BigIcon><PasteIcon /></BigIcon>
                    <BigText $ls={-1}>貼り付け</BigText>
                    <BigText><Chev /></BigText>
                  </BigBtn>
                  <ToolCol $ml={7}>
                    <ToolRow><Slot $w={30}><ScissorsIcon /></Slot></ToolRow>
                    <ToolRow><Slot $w={30}><CopyIcon /></Slot><Slot $w={14} $ml={10}><Chev c="#aaa" /></Slot></ToolRow>
                    <ToolRow><Slot $w={30}><BrushIcon /></Slot></ToolRow>
                  </ToolCol>
                </GroupBody>
                <GroupLabel $launcher>クリップボード</GroupLabel>
                <LaunchIcon />
              </Group>

              <Group $w={189}>
                <GroupBody>
                  <BigBtn $w={92} $ml={18}>
                    <BigIcon><NewSlideIcon /></BigIcon>
                    <BigText>新しい</BigText>
                    <BigText $ls={-2}>スライド<Chev /></BigText>
                  </BigBtn>
                  <ToolCol $ml={4}>
                    <ToolRow><Slot $w={34}><LayoutIcon /></Slot><Slot $w={22}><Chev /></Slot></ToolRow>
                    <ToolRow><Slot $w={34}><ResetIcon /></Slot></ToolRow>
                    <ToolRow><Slot $w={34}><SectionIcon /></Slot><Slot $w={22}><Chev /></Slot></ToolRow>
                  </ToolCol>
                </GroupBody>
                <GroupLabel>スライド</GroupLabel>
              </Group>

              <Group $w={369}>
                <GroupBody>
                  <ToolCol>
                    <SelectRow>
                      <Select $w={248}>メイリオ<Chev /></Select>
                      <Select $w={92}><Glyph $fs={24}>13</Glyph><Chev /></Select>
                    </SelectRow>
                    <ToolRow $ml={15}>
                      <Slot $w={40}><Glyph $fs={26} $b>B</Glyph></Slot>
                      <Slot $w={38}><Glyph $fs={26} $i>I</Glyph></Slot>
                      <Slot $w={39}><Glyph $fs={26} $u>U</Glyph></Slot>
                      <Slot $w={38}><Glyph $fs={26} $b>S</Glyph></Slot>
                      <Slot $w={42}><Glyph $fs={25} $s>ab</Glyph></Slot>
                      <Slot $w={38}><Glyph $fs={25}>AV</Glyph></Slot>
                      <Slot $w={18}><Chev /></Slot>
                    </ToolRow>
                    <ToolRow $ml={15}>
                      <Slot $w={42}><HighlightIcon /></Slot>
                      <Slot $w={20}><Chev /></Slot>
                      <Slot $w={50}><FontColorA /></Slot>
                      <Slot $w={16}><Chev /></Slot>
                      <Slot $w={50}><Glyph $fs={25}>Aa</Glyph></Slot>
                      <Slot $w={14}><Chev /></Slot>
                      <Slot $w={24}><VSep /></Slot>
                      <Slot $w={42}><Glyph $fs={32}>A</Glyph><UpDown /></Slot>
                      <Slot $w={38}><Glyph $fs={27}>A</Glyph><DownMark /></Slot>
                      <Slot $w={8}><VSep /></Slot>
                      <Slot $w={38}><ClearIcon /></Slot>
                    </ToolRow>
                  </ToolCol>
                </GroupBody>
                <GroupLabel $launcher>フォント</GroupLabel>
                <LaunchIcon />
              </Group>

              <Group $w={304}>
                <GroupBody>
                  <ToolCol $ml={16}>
                    <ToolRow>
                      <Slot $w={68} $sel><BulletIcon /><Chev /></Slot>
                      <Slot $w={32} $ml={4}><NumIcon /></Slot>
                      <Slot $w={22} $ml={2}><Chev /></Slot>
                      <Slot $w={30} $ml={18}><SpacingIcon /></Slot>
                      <Slot $w={22}><Chev /></Slot>
                      <Slot $w={30} $ml={16}><TextDirIcon /></Slot>
                      <Slot $w={24}><Chev /></Slot>
                    </ToolRow>
                    <ToolRow>
                      <Slot $w={26} $ml={7}><IndentL /></Slot>
                      <Slot $w={26} $ml={13}><IndentR /></Slot>
                      <Slot $w={24} $ml={26}><ColumnsIcon /></Slot>
                      <Slot $w={30}><Chev /></Slot>
                      <Slot $w={31} $ml={63}><AlignTextIcon /></Slot>
                      <Slot $w={24}><Chev /></Slot>
                    </ToolRow>
                    <ToolRow>
                      <Slot $w={39} $sel><Align rows={[[0, 28], [0, 18], [0, 28], [0, 18]]} /></Slot>
                      <Slot $w={26} $ml={7}><Align rows={[[0, 28], [5, 23], [0, 28], [5, 23]]} /></Slot>
                      <Slot $w={26} $ml={14}><Align rows={[[0, 28], [10, 28], [0, 28], [10, 28]]} /></Slot>
                      <Slot $w={27} $ml={12}><Align rows={[[0, 28], [0, 28], [0, 28], [0, 28]]} /></Slot>
                      <Slot $w={29} $ml={12}><DistIcon /></Slot>
                      <Slot $w={32} $ml={24}><SmartIcon /></Slot>
                      <Slot $w={20}><Chev /></Slot>
                    </ToolRow>
                  </ToolCol>
                </GroupBody>
                <GroupLabel $launcher>段落</GroupLabel>
                <LaunchIcon />
              </Group>

              <Group $w={120}>
                <GroupBody>
                  <BigBtn $w={118}>
                    <BoxIcon><ShapesIcon /></BoxIcon>
                    <BigText>図形描画</BigText>
                    <BigText><Chev /></BigText>
                  </BigBtn>
                </GroupBody>
              </Group>

              <Group $w={98}>
                <GroupBody>
                  <BigBtn $w={96}>
                    <BoxIcon><FindIcon /></BoxIcon>
                    <BigText>編集</BigText>
                    <BigText><Chev /></BigText>
                  </BigBtn>
                </GroupBody>
              </Group>

              <Group $w={182}>
                <GroupBody>
                  <BigBtn $w={180}>
                    <BigIcon><PdfIcon /></BigIcon>
                    <BigText>Adobe PDF の</BigText>
                    <BigText>作成および共有</BigText>
                  </BigBtn>
                </GroupBody>
                <GroupLabel $latin>Adobe Acrobat</GroupLabel>
              </Group>

              <Group $w={106}>
                <GroupBody>
                  <BigBtn $w={104}>
                    <BigIcon><DesignIcon /></BigIcon>
                    <BigText>デザイン</BigText>
                    <BigText>アイデア</BigText>
                  </BigBtn>
                </GroupBody>
                <GroupLabel>デザイナー</GroupLabel>
              </Group>
            </Groups>

            <Main>
              <Pane>
                {[1, 2, 3, 4, 5].map(n => (
                  <PaneRow key={n} $active={n === 3}>
                    <PaneNum>{n}</PaneNum>
                    <PaneThumb $active={n === 3} />
                  </PaneRow>
                ))}
              </Pane>
              <Canvas>
                <Slide>
                  <SlideTitle>IPアドレス(1)</SlideTitle>
                  <TextBox>
                    <RotLine />
                    <RotIcon viewBox="0 0 48 44"><g fill="none" stroke="#aaa" strokeWidth="4"><path d="M36 26a15 15 0 1 1-4-15" /><circle cx="22" cy="22" r="8" /><path d="M26 20h18l-9 12z" fill="#fff" /></g></RotIcon>
                    {handles.map(([x, y]) => <Handle key={`${x}-${y}`} $x={x} $y={y} />)}
                    <FitBtn><FitIcon /></FitBtn>
                    <Cursor viewBox="0 0 32 52"><path d="M1 0v42l9-9 9 19 6-3-9-18h14z" fill="#000" /></Cursor>
                    {slideQs.map((g, i) => (
                      <QBlock key={i}>
                        <QRow><QNum>{i + 1}.</QNum><QText $ls={g.ls}>{g.q}</QText></QRow>
                        {g.items.map((it, j) => (
                          <SubRow key={j}><Dash>–</Dash><SubText $b={it.b} $ls={it.ls}>{it.t}</SubText></SubRow>
                        ))}
                      </QBlock>
                    ))}
                  </TextBox>
                </Slide>
              </Canvas>
            </Main>

            <StatusBar>
              <StatusSlot $ml={14}>スライド 3/5</StatusSlot>
              <StatusSlot $ml={33}><StatBook /></StatusSlot>
              <StatusSlot $ml={35}>英語 (米国)</StatusSlot>
              <StatusSlot $ml={454}><NotesI />ノート</StatusSlot>
              <StatusSlot $ml={26} $fs={22}><DispI />表示設定</StatusSlot>
              <StatusSlot $ml={33} $w={73} $sel><ViewNormal /></StatusSlot>
              <StatusSlot $ml={25}><ViewSort /></StatusSlot>
              <StatusSlot $ml={44}><ViewRead /></StatusSlot>
              <StatusSlot $ml={51}><ViewShow /></StatusSlot>
              <StatusSlot $ml={38}>−</StatusSlot>
              <Zoomer />
              <StatusSlot $ml={8}>+</StatusSlot>
              <StatusSlot $ml={26} $fs={24}>72%</StatusSlot>
              <StatusSlot $ml={20}>◁</StatusSlot>
            </StatusBar>
          </Ppt>

          <SideColumn><Memo>【Memo】</Memo></SideColumn>

          <Poll>
            <PollHead>IPアドレス（1）　進行中</PollHead>
            <PollStatus>視聴者が現在質問を表示しています<PollCount>173/193 (89%)</PollCount>人が投票済み</PollStatus>
            <PollBody>
              {pollQs.map((q, i) => (
                <PollGroup key={i}>
                  <PollQ $ls={q.ls}>{q.title}</PollQ>
                  {q.opts.map((o, j) => (
                    <PollOpt key={j}>
                      <OptText>{o.t}</OptText>
                      {o.mark && <OptMark $far={o.mark === 'far'}>(1</OptMark>}
                      <OptTrack><OptFill style={{ width: o.w }} /></OptTrack>
                    </PollOpt>
                  ))}
                </PollGroup>
              ))}
            </PollBody>
            <PollFoot><EndBtn>投票の終了</EndBtn></PollFoot>
          </Poll>
        </ShareArea>
      </ZoomWindow>

      <Dock>
        {renderDock(dockLeft)}
        <DockSep />
        {renderDock(dockMid)}
        <DockSep />
        {renderDock(dockRight)}
      </Dock>
    </Desktop>
  );
}
